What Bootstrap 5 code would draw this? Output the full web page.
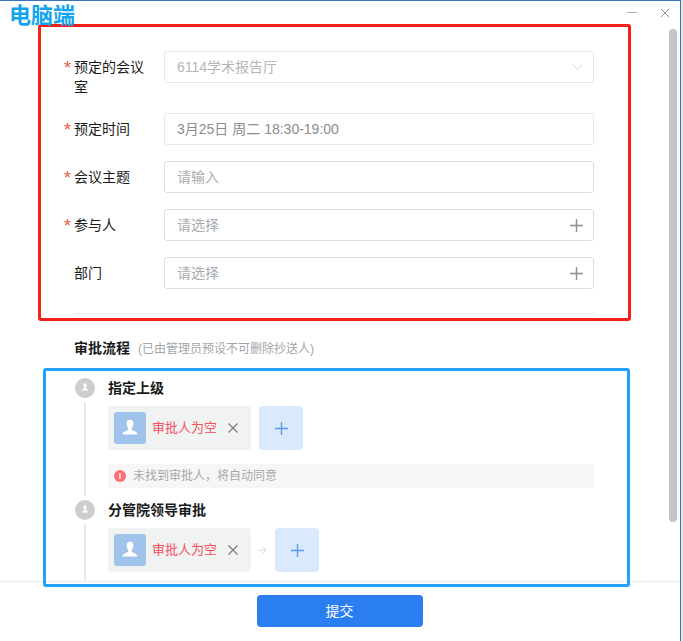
<!DOCTYPE html>
<html lang="zh-CN">
<head>
    <meta charset="UTF-8">
    <meta name="viewport" content="width=device-width, initial-scale=1.0">
    <title>预定会议室</title>
    <link href="https://cdn.jsdelivr.net/npm/bootstrap@5.3.0/dist/css/bootstrap.min.css" rel="stylesheet">
    <style>
        body {
            background: #e8e8e8;
            font-family: "Liberation Sans", "Noto Sans CJK SC", sans-serif;
            font-size: 14px;
            color: #1a1a1a;
            overflow: hidden;
        }
        .app-window {
            position: relative;
            width: 681px;
            height: 641px;
            background: #fff;
            border-top: 1px solid #3b73b9;
            border-right: 1px solid #3b73b9;
        }
        .win-bar { height: 24px; padding: 7px 10px 0 0; gap: 23px; }
        .page-body { height: 556px; overflow: hidden; padding: 26px 0 0 64px; }
        .form-line { width: 530px; margin-bottom: 16px; }
        .form-line.tall { margin-bottom: 16px; }
        .req-mark { width: 10px; color: #f25643; font-size: 18px; line-height: 20px; padding-top: 7px; flex-shrink: 0; }
        .form-name { width: 90px; padding-right: 14px; line-height: 20px; padding-top: 6px; flex-shrink: 0; }
        .fake-input {
            width: 430px;
            height: 32px;
            border: 1px solid #dcdfe0;
            border-radius: 3px;
            padding: 0 10px 0 12px;
            color: #a9acaf;
        }
        .fake-input.is-off { border-color: #e8e8e8; }
        .fake-input.is-dim { color: #b4b6b8; }
        .fake-input.has-value { color: #8a8d90; }
        .form-rule { width: 520px; height: 1px; background: #ececec; margin: 24px 0 0 10px; }
        .flow-head { margin: 24px 0 0 10px; line-height: 20px; font-weight: 700; }
        .flow-head span { font-weight: 400; color: #a2a5a8; font-size: 12px; margin-left: 8px; }
        .flow-list { margin-top: 19px; margin-left: 11px; width: 519px; }
        .flow-step { display: flex; gap: 13px; }
        .step-rail { width: 20px; flex-shrink: 0; align-items: center; }
        .step-dot { width: 20px; height: 20px; border-radius: 50%; background: #cdcdcd; flex-shrink: 0; }
        .step-line { width: 2px; flex: 1; background: #e9e9e9; margin: 4px 0; }
        .step-main { flex: 1; min-width: 0; }
        .step-title { font-weight: 700; line-height: 20px; margin-bottom: 8px; }
        .person-chip {
            width: 143px;
            height: 44px;
            background: #f1f3f3;
            border-radius: 4px;
            padding: 6px;
        }
        .person-pic { width: 32px; height: 32px; background: #9fc3ea; border-radius: 3px; flex-shrink: 0; }
        .person-name { color: #f2505d; margin-left: 6px; font-size: 13px; white-space: nowrap; }
        .chip-close { margin-left: 11px; }
        .add-box { width: 44px; height: 44px; background: #dbe9fc; border-radius: 4px; }
        .notice-bar {
            height: 24px;
            background: #f6f6f6;
            margin: 14px 0 12px;
            padding-left: 6px;
            gap: 7px;
            color: #a6a8aa;
            font-size: 12px;
        }
        .notice-dot {
            width: 12px;
            height: 12px;
            border-radius: 50%;
            background: #fb7078;
            color: #fff;
            font-size: 9px;
            font-weight: 700;
            line-height: 12px;
            text-align: center;
        }
        .page-foot { height: 60px; border-top: 1px solid #e9edf0; padding-top: 13px; }
        .submit-btn {
            width: 166px;
            height: 32px;
            background: #2a7ef2;
            color: #fff;
            border: 0;
            border-radius: 4px;
            font-size: 14px;
            padding: 0;
            margin-left: -1px;
        }
        .scroll-thumb {
            position: absolute;
            left: 669px;
            top: 28px;
            width: 8px;
            height: 493px;
            background: #c1c4c8;
            border-radius: 4px;
        }
        .mark-title {
            position: absolute;
            left: 9px;
            top: 0;
            color: #12a5ee;
            font-size: 22px;
            font-weight: 700;
            line-height: 29px;
        }
        .mark-red, .mark-blue { position: absolute; border-radius: 3px; }
        .mark-red { left: 38px; top: 23px; width: 593px; height: 297px; border: 3px solid #f5201a; }
        .mark-blue { left: 43px; top: 367px; width: 587px; height: 219px; border: 3px solid #22a0fb; }
    </style>
</head>
<body>
    <div class="app-window">
        <!-- window buttons -->
        <div class="win-bar d-flex justify-content-end">
            <svg width="10" height="10" viewBox="0 0 10 10"><path d="M0 4.500h10" stroke="#a8a8a8" fill="none"/></svg>
            <svg width="10" height="10" viewBox="0 0 10 10"><path d="M1 1l8 8M9 1l-8 8" stroke="#8f8f8f" fill="none"/></svg>
        </div>

        <div class="page-body">
            <div class="form-line tall d-flex">
                <div class="req-mark">*</div>
                <div class="form-name">预定的会议室</div>
                <div class="fake-input is-off is-dim d-flex align-items-center justify-content-between">
                    <span>6114学术报告厅</span>
                    <svg width="11" height="8" viewBox="0 0 11 8"><path d="M.5 1.500l5 5 5-5" stroke="#d6d6d6" fill="none"/></svg>
                </div>
            </div>
            <div class="form-line d-flex">
                <div class="req-mark">*</div>
                <div class="form-name">预定时间</div>
                <div class="fake-input is-off has-value d-flex align-items-center">3月25日 周二 18:30-19:00</div>
            </div>
            <div class="form-line d-flex">
                <div class="req-mark">*</div>
                <div class="form-name">会议主题</div>
                <div class="fake-input d-flex align-items-center">请输入</div>
            </div>
            <div class="form-line d-flex">
                <div class="req-mark">*</div>
                <div class="form-name">参与人</div>
                <div class="fake-input d-flex align-items-center justify-content-between">
                    <span>请选择</span>
                    <svg width="13" height="13" viewBox="0 0 13 13"><path d="M6.500 0v13M0 6.500h13" stroke="#8c8f92" stroke-width="1.4" fill="none"/></svg>
                </div>
            </div>
            <div class="form-line d-flex mb-0">
                <div class="req-mark"></div>
                <div class="form-name">部门</div>
                <div class="fake-input d-flex align-items-center justify-content-between">
                    <span>请选择</span>
                    <svg width="13" height="13" viewBox="0 0 13 13"><path d="M6.500 0v13M0 6.500h13" stroke="#8c8f92" stroke-width="1.4" fill="none"/></svg>
                </div>
            </div>
            <div class="form-rule"></div>

            <div class="flow-head">审批流程<span>(已由管理员预设不可删除抄送人)</span></div>

            <div class="flow-list">
                <div class="flow-step">
                    <div class="step-rail d-flex flex-column">
                        <div class="step-dot d-flex align-items-center justify-content-center">
                            <svg width="10" height="10" viewBox="0 0 10 10"><path d="M3.400 1.900a1.600 1.600 0 0 1 3.200 0c0 1-.5 1.800-.8 2.400v1c0 .5 2.600.7 2.600 2.200H1.600c0-1.500 2.600-1.700 2.600-2.200v-1c-.3-.6-.8-1.400-.8-2.400z" fill="#fff"/></svg>
                        </div>
                        <div class="step-line"></div>
                    </div>
                    <div class="step-main">
                        <div class="step-title">指定上级</div>
                        <div class="d-flex align-items-center gap-2">
                            <div class="person-chip d-flex align-items-center">
                                <div class="person-pic d-flex align-items-center justify-content-center">
                                    <svg width="20" height="20" viewBox="0 0 20 20"><path d="M6.600 5.200a3.400 3.400 0 0 1 6.800 0c0 2.400-1.100 4-1.700 5v1.400c0 1.200 5.800 1.600 5.800 5H2.500c0-3.400 5.800-3.800 5.800-5v-1.400c-.6-1-1.700-2.600-1.700-5z" fill="#fff"/></svg>
                                </div>
                                <span class="person-name">审批人为空</span>
                                <svg class="chip-close" width="10" height="10" viewBox="0 0 10 10"><path d="M.5.5l9 9M9.500.5l-9 9" stroke="#77797b" stroke-width="1.100" fill="none"/></svg>
                            </div>
                            <div class="add-box d-flex align-items-center justify-content-center">
                                <svg width="13" height="13" viewBox="0 0 13 13"><path d="M6.500 0v13M0 6.500h13" stroke="#5a9bf0" stroke-width="1.400" fill="none"/></svg>
                            </div>
                        </div>
                        <div class="notice-bar d-flex align-items-center">
                            <div class="notice-dot">!</div>
                            <span>未找到审批人，将自动同意</span>
                        </div>
                    </div>
                </div>
                <div class="flow-step">
                    <div class="step-rail d-flex flex-column">
                        <div class="step-dot d-flex align-items-center justify-content-center">
                            <svg width="10" height="10" viewBox="0 0 10 10"><path d="M3.400 1.900a1.600 1.600 0 0 1 3.200 0c0 1-.5 1.800-.8 2.400v1c0 .5 2.600.7 2.600 2.200H1.600c0-1.500 2.600-1.700 2.600-2.200v-1c-.3-.6-.8-1.400-.8-2.400z" fill="#fff"/></svg>
                        </div>
                        <div class="step-line mb-0"></div>
                    </div>
                    <div class="step-main">
                        <div class="step-title">分管院领导审批</div>
                        <div class="d-flex align-items-center">
                            <div class="person-chip d-flex align-items-center">
                                <div class="person-pic d-flex align-items-center justify-content-center">
                                    <svg width="20" height="20" viewBox="0 0 20 20"><path d="M6.600 5.200a3.400 3.400 0 0 1 6.800 0c0 2.400-1.100 4-1.700 5v1.400c0 1.200 5.800 1.600 5.800 5H2.500c0-3.400 5.800-3.800 5.800-5v-1.400c-.6-1-1.700-2.600-1.700-5z" fill="#fff"/></svg>
                                </div>
                                <span class="person-name">审批人为空</span>
                                <svg class="chip-close" width="10" height="10" viewBox="0 0 10 10"><path d="M.5.5l9 9M9.500.5l-9 9" stroke="#77797b" stroke-width="1.100" fill="none"/></svg>
                            </div>
                            <svg class="mx-2" width="8" height="8" viewBox="0 0 8 8"><path d="M0 4h7M4 1l3 3-3 3" stroke="#d5d5d5" fill="none"/></svg>
                            <div class="add-box d-flex align-items-center justify-content-center">
                                <svg width="13" height="13" viewBox="0 0 13 13"><path d="M6.500 0v13M0 6.500h13" stroke="#5a9bf0" stroke-width="1.400" fill="none"/></svg>
                            </div>
                        </div>
                        <div class="pb-5"></div>
                    </div>
                </div>
            </div>
        </div>

        <div class="page-foot d-flex justify-content-center">
            <button type="button" class="submit-btn">提交</button>
        </div>

        <!-- scrollbar and review marks lie over the page -->
        <div class="scroll-thumb"></div>
        <div class="mark-red"></div>
        <div class="mark-blue"></div>
        <div class="mark-title">电脑端</div>
    </div>
    <script src="https://cdn.jsdelivr.net/npm/bootstrap@5.3.0/dist/js/bootstrap.bundle.min.js"></script>
</body>
</html>
